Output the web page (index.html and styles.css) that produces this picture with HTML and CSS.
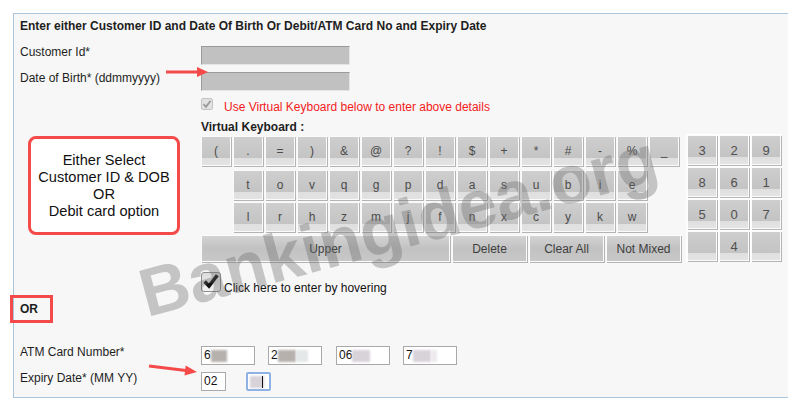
FILE: index.html
```html
<!DOCTYPE html>
<html lang="en">
<head>
    <meta charset="UTF-8">
    <title>Login - Customer ID / Debit Card</title>
    <link rel="stylesheet" href="styles.css">
</head>
<body>
    <div class="panel">
        <div class="heading">Enter either Customer ID and Date Of Birth Or Debit/ATM Card No and Expiry Date</div>

        <div class="row row-first">
            <div class="label">Customer Id*</div>
            <div class="field"><div class="input-gray"></div></div>
        </div>
        <div class="row row-next">
            <div class="label">Date of Birth* (ddmmyyyy)</div>
            <div class="field"><div class="input-gray"></div></div>
        </div>

        <div class="row row-vkcheck">
            <div class="label"></div>
            <div class="field vk-check">
                <span class="small-check">
                    <svg width="10" height="10" viewBox="0 0 10 10"><path d="M1.5 5.2 L4 7.8 L8.6 1.8" fill="none" stroke="#9a9a9a" stroke-width="1.8"/></svg>
                </span>
                <span class="vk-note">Use Virtual Keyboard below to enter above details</span>
            </div>
        </div>

        <div class="row row-vklabel">
            <div class="label"></div>
            <div class="field vk-title">Virtual Keyboard :</div>
        </div>

        <div class="row row-kbd">
            <div class="label">
                <div class="note-box">Either Select<br>Customer ID &amp; DOB<br>OR<br>Debit card option</div>
            </div>
            <div class="kbd">
                <div class="kbd-main">
                    <div class="kbd-row">
                        <span class="key">(</span><span class="key">.</span><span class="key">=</span><span class="key">)</span><span class="key">&amp;</span><span class="key">@</span><span class="key">?</span><span class="key">!</span><span class="key">$</span><span class="key">+</span><span class="key">*</span><span class="key">#</span><span class="key">-</span><span class="key">%</span><span class="key">_</span>
                    </div>
                    <div class="kbd-row kbd-row2">
                        <span class="key">t</span><span class="key">o</span><span class="key">v</span><span class="key">q</span><span class="key">g</span><span class="key">p</span><span class="key">d</span><span class="key">a</span><span class="key">s</span><span class="key">u</span><span class="key">b</span><span class="key">i</span><span class="key">e</span>
                    </div>
                    <div class="kbd-row kbd-row3">
                        <span class="key">l</span><span class="key">r</span><span class="key">h</span><span class="key">z</span><span class="key">m</span><span class="key">j</span><span class="key">f</span><span class="key">n</span><span class="key">x</span><span class="key">c</span><span class="key">y</span><span class="key">k</span><span class="key">w</span>
                    </div>
                    <div class="kbd-row kbd-row4">
                        <span class="key key-upper">Upper</span><span class="key key-wide">Delete</span><span class="key key-wide">Clear All</span><span class="key key-wide">Not Mixed</span>
                    </div>
                </div>
                <div class="numpad">
                    <span class="key">3</span><span class="key">2</span><span class="key">9</span>
                    <span class="key">8</span><span class="key">6</span><span class="key">1</span>
                    <span class="key">5</span><span class="key">0</span><span class="key">7</span>
                    <span class="key"></span><span class="key">4</span><span class="key"></span>
                </div>
            </div>
        </div>

        <div class="row row-hover">
            <div class="label"></div>
            <div class="field hover-check">
                <span class="big-check">
                    <svg width="20" height="20" viewBox="0 0 20 20"><path d="M3 9.5 L7.8 14.5 L17 2.5" fill="none" stroke="#111" stroke-width="4"/></svg>
                </span>
                <span class="hover-text">Click here to enter by hovering</span>
            </div>
        </div>

        <div class="row row-or">
            <span class="or-box">OR</span>
        </div>

        <div class="row row-card">
            <div class="label">ATM Card Number*</div>
            <div class="field cards">
                <div class="input-white card">6<span class="blur blur-dark b1"></span></div>
                <div class="input-white card">2<span class="blur blur-dark b2"></span><span class="blur blur-pale b2p"></span></div>
                <div class="input-white card card3">06<span class="blur blur-light b3"></span></div>
                <div class="input-white card">7<span class="blur blur-light b4"></span><span class="blur blur-pale b4p"></span></div>
            </div>
        </div>
        <div class="row row-next">
            <div class="label">Expiry Date* (MM YY)</div>
            <div class="field expiry">
                <div class="input-white short">02</div>
                <div class="input-white short focused"><span class="blur blur-light b5"></span><span class="caret"></span></div>
            </div>
        </div>

        <!-- annotations drawn over the form -->
        <svg class="arrow arrow-dob" width="44" height="12" viewBox="0 0 44 12">
            <line x1="0" y1="6" x2="32" y2="6" stroke="#f44a4a" stroke-width="3"/>
            <polygon points="31,1 42,6 31,11" fill="#f44a4a"/>
        </svg>
        <svg class="arrow arrow-exp" width="50" height="18" viewBox="0 0 50 18">
            <line x1="1" y1="6" x2="38" y2="10.6" stroke="#f44a4a" stroke-width="3"/>
            <polygon points="36.5,15.5 49,12 37.7,5.5" fill="#f44a4a"/>
        </svg>

        <div class="watermark">Bankingidea.org</div>
    </div>
</body>
</html>
```

FILE: styles.css
```css
body {
    margin: 0;
    background: #fff;
    font-family: "Liberation Sans", Arial, sans-serif;
    font-size: 12px;
    color: #1e1e1e;
    overflow: hidden;
}

.panel {
    position: relative;
    width: 800px;
    margin: 13px 0 0 13px;
    padding: 5px 0 6px 6px;
    border: 1px solid #a9c6de;
    background: #f7f7f7;
}

.heading {
    font-weight: bold;
    line-height: 14px;
}

.row {
    display: flex;
    align-items: flex-start;
}

.label {
    width: 181px;
    flex: none;
    line-height: 13px;
}

.row-first { margin-top: 13px; }
.row-next { margin-top: 7px; }
.row-vkcheck { margin-top: 7px; }
.row-vklabel { margin-top: 8px; }
.row-hover { margin-top: 10px; }
.row-or { margin-top: 3px; }
.row-card { margin-top: 23px; }

.input-gray {
    box-sizing: border-box;
    width: 149px;
    height: 19px;
    background: #c1c1c1;
    border: 1px solid;
    border-color: #9b9b9b #e4e4e4 #e4e4e4 #9b9b9b;
}

.vk-check {
    display: flex;
    align-items: flex-start;
    height: 14px;
}

.small-check {
    box-sizing: border-box;
    width: 12px;
    height: 12px;
    border: 1px solid #c4c4c4;
    border-radius: 2px;
    background: #e2e2e2;
    display: flex;
    align-items: center;
    justify-content: center;
}

.vk-note {
    margin-left: 11px;
    padding-top: 2px;
    line-height: 14px;
    color: #f31b1b;
}

.vk-title {
    font-weight: bold;
    line-height: 14px;
}

.note-box {
    box-sizing: border-box;
    width: 152px;
    height: 99px;
    margin: 2px 0 0 8px;
    border: 3px solid #f44a4a;
    border-radius: 8px;
    background: #fff;
    display: flex;
    align-items: center;
    justify-content: center;
    text-align: center;
    font-size: 14.6px;
    line-height: 17px;
    color: #111;
}

/* virtual keyboard */
.kbd {
    display: flex;
    gap: 5px;
}

.kbd-main {
    width: 480px;
    margin-top: 2px;
}

.kbd-row {
    display: flex;
    gap: 2px;
}

.kbd-row2 { margin: 4px 0 0 32px; }
.kbd-row3 { margin: 2px 0 0 32px; }
.kbd-row4 { margin-top: 3px; }

.key {
    box-sizing: border-box;
    width: 30px;
    height: 30px;
    display: flex;
    align-items: center;
    justify-content: center;
    border: 1px solid #fbfbfb;
    box-shadow: 1px 1px 0 #b4b4b4;
    background: linear-gradient(#cecece 0%, #c4c4c4 74%, #dfdfdf 74%, #e3e3e3 100%);
    color: #4b4b4b;
    font-size: 12px;
}

.kbd-row4 .key {
    height: 27px;
    background: linear-gradient(#d3d3d3 0%, #c2c2c2 50%, #c8c8c8 100%);
    color: #3e3e3e;
}

.key-upper { width: 249px; }
.key-wide { width: 75px; }

.numpad {
    display: grid;
    grid-template-columns: repeat(3, 30px);
    grid-auto-rows: 30px;
    gap: 2px;
    padding: 1px;
    background: #fff;
}

.numpad .key {
    font-size: 13px;
    color: #505050;
}

/* hover option */
.hover-check {
    display: flex;
    align-items: flex-end;
    height: 20px;
}

.big-check {
    box-sizing: border-box;
    width: 20px;
    height: 20px;
    border: 1px solid #8e8e8e;
    border-radius: 3px;
    background: linear-gradient(#dcdcdc, #f2f2f2);
    display: flex;
    align-items: center;
    justify-content: center;
}

.hover-text {
    margin: 0 0 -3px 3px;
    line-height: 14px;
    color: #111;
}

.or-box {
    box-sizing: border-box;
    height: 28px;
    margin-left: -10px;
    padding: 4px 12px 0 7px;
    border: 3px solid #f44a4a;
    font-weight: bold;
    line-height: 14px;
}

/* card fields */
.cards,
.expiry {
    display: flex;
}

.cards { gap: 13px; }
.card3 { margin-left: 1px; }
.expiry { gap: 20px; }

.input-white {
    position: relative;
    box-sizing: border-box;
    width: 54px;
    height: 19px;
    padding-left: 2px;
    border: 1px solid #a9a9a9;
    background: #fff;
    line-height: 17px;
    font-size: 12px;
    color: #111;
    display: flex;
    align-items: center;
}

.input-white.short { width: 25px; }

.input-white.focused {
    border: 2px solid #8fb2e6;
    border-radius: 2px;
}

.blur {
    display: inline-block;
    height: 12px;
    filter: blur(0.8px);
}

.blur-dark { background: #b6b1ad; }
.blur-light { background: #d8d3d8; }
.blur-pale { background: #e4e8e9; }

.b1 { width: 16px; }
.b2 { width: 18px; }
.b2p { width: 12px; }
.b3 { width: 18px; }
.b4 { width: 18px; }
.b4p { width: 6px; background: #ede9ed; }
.b5 { width: 14px; }

.caret {
    position: absolute;
    left: 14px;
    top: 2px;
    width: 1px;
    height: 12px;
    background: #111;
}

/* annotations */
.arrow {
    position: absolute;
}

.arrow-dob {
    left: 152px;
    top: 52px;
}

.arrow-exp {
    left: 134px;
    top: 346px;
}

.watermark {
    position: absolute;
    left: 384px;
    top: 211px;
    transform: translate(-50%, -50%) rotate(-15deg);
    font-size: 68px;
    font-weight: bold;
    white-space: nowrap;
    color: rgba(105, 105, 105, 0.36);
    pointer-events: none;
}
```
